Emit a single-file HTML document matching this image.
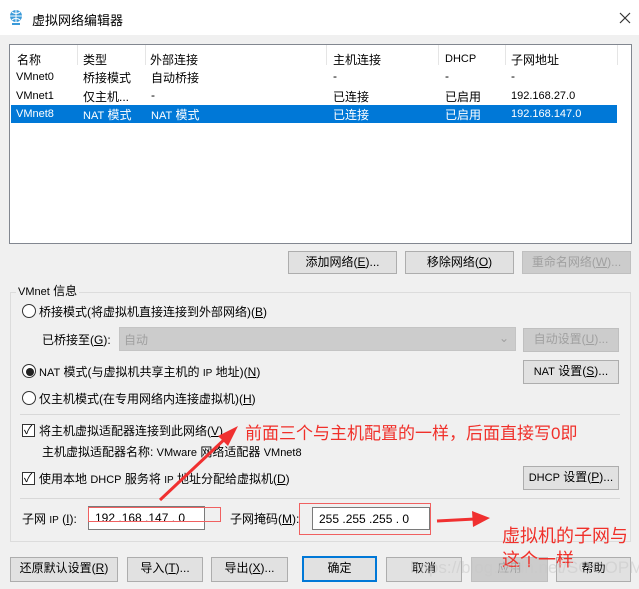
<!DOCTYPE html>
<html><head><meta charset="utf-8"><style>
*{margin:0;padding:0;box-sizing:border-box}
body{width:639px;height:589px;overflow:hidden;background:#f0f0f0;font-family:"Liberation Sans","Noto Sans CJK SC",sans-serif;font-size:12px;color:#000;position:relative}
.a{position:absolute;white-space:nowrap}
.btn{position:absolute;background:#e1e1e1;border:1px solid #adadad;text-align:center;font-size:12px;line-height:21px}
.dis{color:#a0a0a0;background:#cccccc;border-color:#bfbfbf}
u{text-decoration:underline}
.radio{position:absolute;width:14px;height:14px;border:1px solid #333;border-radius:50%;background:#fff}
.chk{position:absolute;width:13px;height:13px;border:1px solid #333;background:#fff}
.red{color:#f0302a;font-size:17px}
.sep{position:absolute;height:1px;background:#d8d8d8}
.inp{position:absolute;background:#fff;border:1px solid #7a7a7a;padding:4px 6px;font-size:12px;overflow:hidden}
</style></head><body>
<div class="a" style="left:0;top:0;width:639px;height:35px;background:#fff"></div>
<svg class="a" style="left:8px;top:9px" width="16" height="18" viewBox="0 0 16 18"><circle cx="8" cy="7" r="6" fill="#3a9ad9"/><path d="M2 7h12M8 1v12M4 3c2 2 6 2 8 0M4 11c2-2 6-2 8 0" stroke="#fff" stroke-width="1" fill="none"/><rect x="4" y="14" width="8" height="2" fill="#3a9ad9"/></svg>
<div class="a" style="left:32px;top:10px;font-size:13px">虚拟网络编辑器</div>
<svg class="a" style="left:619px;top:12px" width="12" height="12"><path d="M1 1L11 11M11 1L1 11" stroke="#333" stroke-width="1.2"/></svg>

<div class="a" style="left:9px;top:44px;width:623px;height:200px;background:#fff;border:1px solid #828790"></div>
<div class="a" style="left:17px;top:51px">名称</div>
<div class="a" style="left:83px;top:51px">类型</div>
<div class="a" style="left:150px;top:51px">外部连接</div>
<div class="a" style="left:333px;top:51px">主机连接</div>
<div class="a" style="left:445px;top:53px;font-size:11px">DHCP</div>
<div class="a" style="left:511px;top:51px">子网地址</div>
<div class="a" style="left:77px;top:45px;width:1px;height:20px;background:#e5e5e5"></div>
<div class="a" style="left:145px;top:45px;width:1px;height:20px;background:#e5e5e5"></div>
<div class="a" style="left:326px;top:45px;width:1px;height:20px;background:#e5e5e5"></div>
<div class="a" style="left:438px;top:45px;width:1px;height:20px;background:#e5e5e5"></div>
<div class="a" style="left:505px;top:45px;width:1px;height:20px;background:#e5e5e5"></div>
<div class="a" style="left:617px;top:45px;width:1px;height:20px;background:#e5e5e5"></div>

<div class="a" style="left:16px;top:71px;font-size:11px">VMnet0</div><div class="a" style="left:83px;top:69px">桥接模式</div><div class="a" style="left:151px;top:69px">自动桥接</div><div class="a" style="left:333px;top:69px">-</div><div class="a" style="left:445px;top:69px">-</div><div class="a" style="left:511px;top:69px">-</div>
<div class="a" style="left:16px;top:90px;font-size:11px">VMnet1</div><div class="a" style="left:83px;top:88px">仅主机...</div><div class="a" style="left:151px;top:88px">-</div><div class="a" style="left:333px;top:88px">已连接</div><div class="a" style="left:445px;top:88px">已启用</div><div class="a" style="left:511px;top:90px;font-size:11px">192.168.27.0</div>
<div class="a" style="left:11px;top:105px;width:606px;height:18px;background:#0078d7"></div>
<div class="a" style="left:16px;top:108px;font-size:11px;color:#fff">VMnet8</div><div class="a" style="left:83px;top:106px;color:#fff"><span style="font-size:11px">NAT</span> 模式</div><div class="a" style="left:151px;top:106px;color:#fff"><span style="font-size:11px">NAT</span> 模式</div><div class="a" style="left:333px;top:106px;color:#fff">已连接</div><div class="a" style="left:445px;top:106px;color:#fff">已启用</div><div class="a" style="left:511px;top:108px;font-size:11px;color:#fff">192.168.147.0</div>

<div class="btn" style="left:288px;top:251px;width:109px;height:23px">添加网络(<u>E</u>)...</div>
<div class="btn" style="left:405px;top:251px;width:109px;height:23px">移除网络(<u>O</u>)</div>
<div class="btn dis" style="left:522px;top:251px;width:109px;height:23px">重命名网络(<u>W</u>)...</div>

<div class="a" style="left:10px;top:292px;width:621px;height:250px;border:1px solid #dcdcdc"></div>
<div class="a" style="left:16px;top:282px;background:#f0f0f0;padding:0 2px"><span style="font-size:11px">VMnet</span> 信息</div>

<div class="radio" style="left:22px;top:304px"></div>
<div class="a" style="left:39px;top:303px">桥接模式(将虚拟机直接连接到外部网络)(<u>B</u>)</div>
<div class="a" style="left:42px;top:331px">已桥接至(<u>G</u>):</div>
<div class="a" style="left:119px;top:327px;width:397px;height:24px;background:#cccccc;border:1px solid #c4c4c4;color:#a0a0a0;padding:3px 4px">自动<span style="position:absolute;right:6px;top:3px">⌄</span></div>
<div class="btn dis" style="left:523px;top:328px;width:96px;height:24px">自动设置(<u>U</u>)...</div>

<div class="radio" style="left:22px;top:364px"></div><div class="a" style="left:26px;top:368px;width:8px;height:8px;border-radius:50%;background:#222"></div>
<div class="a" style="left:39px;top:363px"><span style="font-size:11px">NAT</span> 模式(与虚拟机共享主机的 <span style="font-size:10px">IP</span> 地址)(<u>N</u>)</div>
<div class="btn" style="left:523px;top:360px;width:96px;height:24px"><span style="font-size:11px">NAT</span> 设置(<u>S</u>)...</div>

<div class="radio" style="left:22px;top:391px"></div>
<div class="a" style="left:39px;top:390px">仅主机模式(在专用网络内连接虚拟机)(<u>H</u>)</div>
<div class="sep" style="left:20px;top:414px;width:600px"></div>

<div class="chk" style="left:22px;top:424px"></div><div class="a" style="left:24px;top:421px;font-size:12px">✓</div>
<div class="a" style="left:39px;top:422px">将主机虚拟适配器连接到此网络(<u>V</u>)</div>
<div class="a" style="left:42px;top:443px">主机虚拟适配器名称: <span style="font-size:11px">VMware</span> 网络适配器 <span style="font-size:11px">VMnet8</span></div>
<div class="chk" style="left:22px;top:472px"></div><div class="a" style="left:24px;top:469px;font-size:12px">✓</div>
<div class="a" style="left:39px;top:470px">使用本地 <span style="font-size:11px">DHCP</span> 服务将 <span style="font-size:10px">IP</span> 地址分配给虚拟机(<u>D</u>)</div>
<div class="btn" style="left:523px;top:466px;width:96px;height:24px"><span style="font-size:11px">DHCP</span> 设置(<u>P</u>)...</div>
<div class="sep" style="left:20px;top:498px;width:600px"></div>

<div class="a" style="left:22px;top:510px">子网 <span style="font-size:10px">IP</span> (<u>I</u>):</div>
<div class="inp" style="left:88px;top:506px;width:117px;height:24px">192 .168 .147 .  0</div>
<div class="a" style="left:88px;top:507px;width:133px;height:15px;border:1px solid #f06060"></div>
<div class="a" style="left:230px;top:510px">子网掩码(<u>M</u>):</div>
<div class="a" style="left:299px;top:503px;width:132px;height:32px;border:1px solid #f06060"></div>
<div class="inp" style="left:312px;top:507px;width:118px;height:23px">255 .255 .255 .  0</div>

<div class="btn" style="left:10px;top:557px;width:108px;height:25px">还原默认设置(<u>R</u>)</div>
<div class="btn" style="left:127px;top:557px;width:76px;height:25px">导入(<u>T</u>)...</div>
<div class="btn" style="left:211px;top:557px;width:77px;height:25px">导出(<u>X</u>)...</div>
<div class="btn" style="left:302px;top:556px;width:75px;height:26px;border:2px solid #0078d7">确定</div>
<div class="btn" style="left:386px;top:557px;width:76px;height:25px">取消</div>
<div class="btn dis" style="left:471px;top:557px;width:77px;height:25px">应用</div>
<div class="btn" style="left:556px;top:557px;width:75px;height:25px">帮助</div>

<div class="a red" style="left:245px;top:419px">前面三个与主机配置的一样，后面直接写0即</div>
<div class="a red" style="left:502px;top:522px;font-size:18px">虚拟机的子网与</div>
<div class="a red" style="left:502px;top:546px;font-size:18px">这个一样</div>
<svg class="a" style="left:0;top:0" width="639" height="589"><path d="M160 500L228 436" stroke="#f03030" stroke-width="3"/><path d="M238 426L218 436L228 446Z" fill="#f03030"/><path d="M437 521L475 519" stroke="#f03030" stroke-width="3"/><path d="M490 518L472 511L473 527Z" fill="#f03030"/></svg>
<div class="a" style="left:410px;top:558px;font-size:17px;color:rgba(200,200,200,0.55)">https://blog.csdn.net/SOOOPM</div>
</body></html>
